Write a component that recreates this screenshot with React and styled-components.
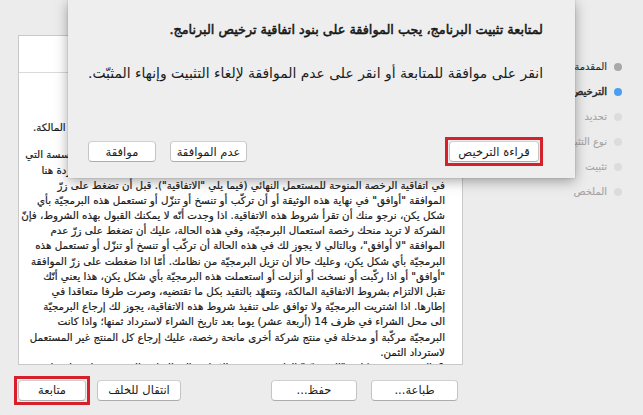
import React from 'react';
import styled, { createGlobalStyle } from 'styled-components';

const GlobalStyle = createGlobalStyle`
  html, body {
    margin: 0;
    padding: 0;
    background: #ececec;
  }
  body {
    font-family: "DejaVu Sans", "Noto Sans", sans-serif;
    color: #1b1b1b;
  }
`;

const Window = styled.div`
  position: relative;
  width: 643px;
  height: 415px;
  overflow: hidden;
  background: #ececec;
  display: flex;
  flex-direction: column;
`;

const Main = styled.div`
  display: flex;
  padding-top: 35px;
  height: 330px;
`;

const Panel = styled.div`
  margin-left: 18px;
  width: 445px;
  height: 330px;
  box-sizing: border-box;
  background: #fff;
  border: 1px solid #c9c9c9;
  overflow: hidden;
  display: flex;
  flex-direction: column;
`;

const PanelHeader = styled.div`
  height: 36px;
  flex: none;
  border-bottom: 1px solid #dadada;
`;

const Doc = styled.div`
  direction: rtl;
  padding: 17px 17px 0 0;
  font-size: 10.3px;
  line-height: 15.2px;
  -webkit-text-stroke: 0.2px #1b1b1b;
`;

const Line = styled.div`
  white-space: nowrap;
  text-align: right;
  height: 15.2px;
  font-weight: ${p => (p.$bold ? 'bold' : 'normal')};
  margin-top: ${p => (p.$gap ? '11.8px' : '0')};
`;

const Sidebar = styled.ul`
  flex: 1;
  list-style: none;
  margin: 0;
  padding: 19px 21px 0 0;
  direction: rtl;
`;

const Step = styled.li`
  height: 25px;
  display: flex;
  align-items: center;
  gap: 7px;
  font-size: 10px;
  white-space: nowrap;
  -webkit-text-stroke: ${p => (p.$state === 'current' ? '0.5px' : '0.1px')};
  color: ${p => (p.$state === 'todo' ? '#a3a3a3' : '#2a2a2a')};
`;

const Dot = styled.span`
  width: 8px;
  height: 8px;
  border-radius: 50%;
  flex: none;
  background: ${p =>
    p.$state === 'current' ? '#4c9ff0' : p.$state === 'done' ? '#a8a8a8' : '#dcdcdc'};
`;

const Footer = styled.div`
  height: 50px;
  display: flex;
  align-items: center;
  padding-left: 14px;
`;

const Highlight = styled.div`
  display: inline-flex;
  border: 3px solid #d6212c;
  padding: 1px;
  margin-right: ${p => p.$mr || 0}px;
`;

const Button = styled.button`
  box-sizing: border-box;
  width: ${p => p.$w}px;
  height: 21px;
  margin-right: ${p => p.$mr || 0}px;
  padding: 0;
  background: #fff;
  border: 1px solid #c4c4c4;
  border-top-color: #d0d0d0;
  border-bottom-color: #adadad;
  border-radius: 4px;
  font-family: "DejaVu Sans", sans-serif;
  font-size: 11.5px;
  color: #1b1b1b;
  direction: rtl;
  white-space: nowrap;
`;

const Sheet = styled.div`
  position: absolute;
  left: 68px;
  top: 0;
  width: 507px;
  height: 178px;
  box-sizing: border-box;
  background: #eeeeee;
  box-shadow: 0 3px 12px rgba(0, 0, 0, 0.35), 0 0 1px rgba(0, 0, 0, 0.3);
  padding: 22px 32px 0 20px;
  display: flex;
  flex-direction: column;
`;

const SheetTitle = styled.div`
  direction: rtl;
  font-size: 12.8px;
  -webkit-text-stroke: 0.5px #111;
  line-height: 16px;
  white-space: nowrap;
`;

const SheetText = styled.div`
  direction: rtl;
  font-size: 13.9px;
  line-height: 16px;
  margin-top: 27px;
  white-space: nowrap;
`;

const SheetButtons = styled.div`
  display: flex;
  align-items: center;
  margin-top: 56px;
`;

const Spacer = styled.div`
  flex: 1;
`;

const docLines = [
  { t: 'اتفاقية ترخيص البرنامج', bold: true },
  { t: '' },
  { t: 'يرجى قراءة هذه الاتفاقية بعناية تامة قبل تثبيت أو استعمال البرامج المرفقة بهذه الاتفاقية المالكة.' },
  { t: 'هذه الوثيقة هي عقد قانوني ملزم بينك وبين الشركة المالكة للبرمجيّة المرفقة بها، أو المؤسسة التي', gap: true },
  { t: 'تمثّلها قانونيا في بلدك، وهي تحدّد جميع الشروط والأحكام المنصوص عليها بالتفصيل والواردة هنا' },
  { t: 'في اتفاقية الرخصة المنوحة للمستعمل النهائي (فيما يلي "الاتفاقية"). قبل أن تضغط على زرّ' },
  { t: 'الموافقة "أوافق" في نهاية هذه الوثيقة أو أن تركّب أو تنسخ أو تنزّل أو تستعمل هذه البرمجيّة بأي' },
  { t: 'شكل يكن، نرجو منك أن تقرأ شروط هذه الاتفاقية. اذا وجدت أنّه لا يمكنك القبول بهذه الشروط، فإنّ' },
  { t: 'الشركة لا تريد منحك رخصة استعمال البرمجيّة، وفي هذه الحالة، عليك أن تضغط على زرّ عدم' },
  { t: 'الموافقة "لا أوافق"، وبالتالي لا يجوز لك في هذه الحالة أن تركّب أو تنسخ أو تنزّل أو تستعمل هذه' },
  { t: 'البرمجيّة بأي شكل يكن، وعليك حالا أن تزيل البرمجيّة من نظامك. أمّا اذا ضغطت على زرّ الموافقة' },
  { t: '"أوافق" أو اذا ركّبت أو نسخت أو أنزلت أو استعملت هذه البرمجيّة بأي شكل يكن، هذا يعني أنّك' },
  { t: 'تقبل الالتزام بشروط الاتفاقية المالكة، وتتعهّد بالتقيد بكل ما تقتضيه، وصرت طرفا متعاقدا في' },
  { t: 'إطارها. اذا اشتريت البرمجيّة ولا توافق على تنفيذ شروط هذه الاتفاقية، يجوز لك إرجاع البرمجيّة' },
  { t: 'الى محل الشراء في ظرف 14 (أربعة عشر) يوما بعد تاريخ الشراء لاسترداد ثمنها؛ واذا كانت' },
  { t: 'البرمجيّة مركّبة أو مدخلة في منتج شركة أخرى مانحة رخصة، عليك إرجاع كل المنتج غير المستعمل' },
  { t: 'لاسترداد الثمن.' },
  { t: '1. الرخصة: تشير كلمة "البرمجيّة" الواردة في هذه الاتفاقية الى البرامج المرفقة وما يتصل بها' },
];

const steps = [
  { label: 'المقدمة', state: 'done' },
  { label: 'الترخيص', state: 'current' },
  { label: 'تحديد', state: 'todo' },
  { label: 'نوع التثبيت', state: 'todo' },
  { label: 'تثبيت', state: 'todo' },
  { label: 'الملخص', state: 'todo' },
];

export default function App() {
  return (
    <>
      <GlobalStyle />
      <Window>
        <Main>
          <Panel>
            <PanelHeader />
            <Doc>
              {docLines.map((l, i) => (
                <Line key={i} $bold={l.bold} $gap={l.gap}>{l.t}</Line>
              ))}
            </Doc>
          </Panel>
          <Sidebar>
            {steps.map(s => (
              <Step key={s.label} $state={s.state}>
                <Dot $state={s.state} />
                {s.label}
              </Step>
            ))}
          </Sidebar>
        </Main>
        <Footer>
          <Highlight $mr={7}>
            <Button $w={68}>متابعة</Button>
          </Highlight>
          <Button $w={84} $mr={90}>انتقال للخلف</Button>
          <Button $w={86} $mr={14}>حفظ...</Button>
          <Button $w={87}>طباعة...</Button>
        </Footer>
        <Sheet>
          <SheetTitle>لمتابعة تثبيت البرنامج، يجب الموافقة على بنود اتفاقية ترخيص البرنامج.</SheetTitle>
          <SheetText>انقر على موافقة للمتابعة أو انقر على عدم الموافقة لإلغاء التثبيت وإنهاء المثبّت.</SheetText>
          <SheetButtons>
            <Button $w={68} $mr={14}>موافقة</Button>
            <Button $w={77}>عدم الموافقة</Button>
            <Spacer />
            <Highlight>
              <Button $w={90}>قراءة الترخيص</Button>
            </Highlight>
          </SheetButtons>
        </Sheet>
      </Window>
    </>
  );
}
